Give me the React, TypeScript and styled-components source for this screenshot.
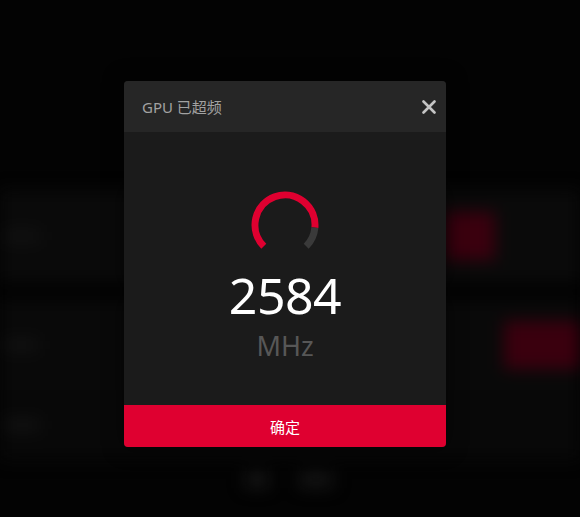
import React from "react"
import styled, { createGlobalStyle } from "styled-components"

const GlobalStyle = createGlobalStyle`
    html, body {
        margin: 0;
        padding: 0;
        background: #030303;
        font-family: "Noto Sans", "Noto Sans CJK SC", sans-serif;
    }
`

const Screen = styled.div`
    position: relative;
    width: 580px;
    height: 517px;
    overflow: hidden;
    background: #030303;
`

// blurred app content behind the modal
const Backdrop = styled.div`
    display: flex;
    flex-direction: column;
    padding-top: 190px;
    filter: blur(8px);
`

const BackRow = styled.div<{ $height: number; $shade: string }>`
    display: flex;
    align-items: center;
    height: ${p => p.$height}px;
    background: ${p => p.$shade};
    padding-left: 4px;
`

const BackLabel = styled.div`
    width: 36px;
    height: 12px;
    background: #121212;
`

const BackButton = styled.div<{ $width: number; $offset: number }>`
    width: ${p => p.$width}px;
    height: 48px;
    margin-left: ${p => p.$offset}px;
    background: #3a000e;
`

const BottomStrip = styled.div`
    display: flex;
    gap: 30px;
    padding: 12px 0 0 245px;
`

const BackDot = styled.div<{ $w: number; $tone: string }>`
    width: ${p => p.$w}px;
    height: 16px;
    background: ${p => p.$tone};
`

const Overlay = styled.div`
    position: absolute;
    inset: 0;
    display: flex;
    align-items: flex-start;
    padding: 81px 0 0 124px;
`

const Dialog = styled.div`
    width: 322px;
    display: flex;
    flex-direction: column;
    border-radius: 4px;
    overflow: hidden;
    background: #1b1b1b;
    box-shadow: 0 0 20px rgba(0, 0, 0, 0.6);
`

const DialogHeader = styled.div`
    height: 51px;
    display: flex;
    align-items: center;
    justify-content: space-between;
    padding: 0 6px 0 18px;
    background: #262626;
`

const Title = styled.div`
    font-size: 15px;
    color: #a2a2a2;
`

const CloseButton = styled.div`
    width: 22px;
    height: 22px;
    display: flex;
    align-items: center;
    justify-content: center;
    cursor: pointer;
`

const DialogBody = styled.div`
    height: 273px;
    display: flex;
    flex-direction: column;
    align-items: center;
    padding-top: 53px;
    box-sizing: border-box;
`

const Reading = styled.div`
    font-size: 50px;
    line-height: 60px;
    color: #ffffff;
    letter-spacing: -0.5px;
`

const Unit = styled.div`
    margin-top: 4px;
    font-size: 27px;
    line-height: 34px;
    color: #575757;
`

const ConfirmButton = styled.div`
    height: 42px;
    display: flex;
    align-items: center;
    justify-content: center;
    background: #df0030;
    color: #ffffff;
    font-size: 15px;
    cursor: pointer;
`

function Gauge() {
    return (
        <svg width="80" height="80" viewBox="0 0 80 80">
            <path d="M18.79 61.21 A30 30 0 1 1 69.89 42.61" fill="none" stroke="#df0030" strokeWidth="7" />
            <path d="M69.89 42.61 A30 30 0 0 1 61.21 61.21" fill="none" stroke="#3a3a3a" strokeWidth="7" />
        </svg>
    )
}

export default function App() {
    return <>
        <GlobalStyle />
        <Screen>
            <Backdrop>
                <BackRow $height={92} $shade="#0a0a0a">
                    <BackLabel />
                    <BackButton $width={52} $offset={403} />
                </BackRow>
                <BackRow $height={18} $shade="#020202" />
                <BackRow $height={90} $shade="#090909">
                    <BackLabel />
                    <BackButton $width={80} $offset={466} />
                </BackRow>
                <BackRow $height={70} $shade="#080808">
                    <BackLabel />
                </BackRow>
                <BottomStrip>
                    <BackDot $w={24} $tone="#141414" />
                    <BackDot $w={34} $tone="#131313" />
                </BottomStrip>
            </Backdrop>
            <Overlay>
                <Dialog>
                    <DialogHeader>
                        <Title>GPU 已超频</Title>
                        <CloseButton>
                            <svg width="14" height="14" viewBox="0 0 14 14">
                                <path d="M1.5 1.5 L12.5 12.5 M12.5 1.5 L1.5 12.5" stroke="#c4c4c4" strokeWidth="2.6" strokeLinecap="round" />
                            </svg>
                        </CloseButton>
                    </DialogHeader>
                    <DialogBody>
                        <Gauge />
                        <Reading>2584</Reading>
                        <Unit>MHz</Unit>
                    </DialogBody>
                    <ConfirmButton>确定</ConfirmButton>
                </Dialog>
            </Overlay>
        </Screen>
    </>
}
